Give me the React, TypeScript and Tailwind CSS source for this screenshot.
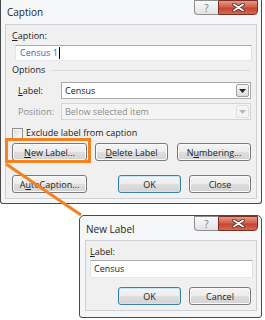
import React from "react";

function U({ children }: { children: React.ReactNode }) {
  return <span className="underline underline-offset-[1px] decoration-[0.5px]">{children}</span>;
}

function Btn({
  children,
  className = "",
  primary = false,
}: {
  children: React.ReactNode;
  className?: string;
  primary?: boolean;
}) {
  return (
    <div
      className={`flex items-center justify-center h-[18px] rounded-[3px] border text-[9px] leading-none text-[#222222] bg-[linear-gradient(#f5f5f5_0%,#ececec_50%,#dedede_50%,#d3d3d3_100%)] ${
        primary
          ? "border-[#3c7fb1] shadow-[inset_0_0_0_1px_#c8e6f8]"
          : "border-[#7a7a7a] shadow-[inset_0_0_0_1px_#fbfbfb]"
      } ${className}`}
    >
      {children}
    </div>
  );
}

function TitleButtons() {
  return (
    <div className="flex mr-[3px]">
      <div className="w-[24px] h-[15px] border border-[#8d8d8d] border-r-0 rounded-bl-[4px] bg-[linear-gradient(#fafafa,#e2e2e2)] flex items-center justify-center text-[10px] leading-none text-[#7a7a7a]">
        ?
      </div>
      <div className="w-[40px] h-[15px] border border-[#7a3026] rounded-br-[4px] bg-[linear-gradient(#e39a88_0%,#d4604b_45%,#c8452f_55%,#d26a50_100%)] flex items-center justify-center">
        <svg width="13" height="9" viewBox="0 0 13 9">
          <path d="M2 1.5 L11 7.5 M11 1.5 L2 7.5" stroke="#5a2a22" strokeWidth="3.6" strokeLinecap="round" />
          <path d="M2 1.5 L11 7.5 M11 1.5 L2 7.5" stroke="#ffffff" strokeWidth="2" strokeLinecap="round" />
        </svg>
      </div>
    </div>
  );
}

function Arrow({ disabled = false }: { disabled?: boolean }) {
  return (
    <div
      className={`w-[13px] h-[13px] mr-px border rounded-[2px] flex items-center justify-center ${
        disabled
          ? "border-[#e0e0e0] bg-[#f4f4f4]"
          : "border-[#a0a0a0] bg-[linear-gradient(#f8f8f8,#dcdcdc)]"
      }`}
    >
      <svg width="7" height="4" viewBox="0 0 7 4">
        <path d="M0 0 L7 0 L3.5 4 Z" fill={disabled ? "#b8b8b8" : "#222222"} />
      </svg>
    </div>
  );
}

export default function App() {
  return (
    <div className="relative w-[265px] h-[320px] bg-white overflow-hidden font-['Open_Sans',sans-serif] text-[#222222]">
      {/* Main Caption dialog */}
      <div className="w-[262px] h-[204px] border border-t-0 border-[#4a4a4a] rounded-b-[3px] bg-[#f5f6f7] flex flex-col">
        <div className="h-[24px] flex justify-between items-start">
          <div className="pl-[6px] pt-[6px] text-[10px] leading-[12px] text-[#1e1e1e]">Caption</div>
          <TitleButtons />
        </div>
        <div className="ml-[4px] mr-[4px] h-[175px] border border-[#cdd0d4] bg-[#f0f0f0] flex flex-col">
          <div className="mt-[5px] h-[12px] leading-[12px] pl-[6px] text-[9px]">
            <U>C</U>aption:
          </div>
          <div className="mt-[3px] ml-[9px] w-[237px] h-[16px] border border-[#abadb3] border-l-[#e2e3ea] border-r-[#dbdfe6] border-b-[#e3e9ef] bg-white flex items-center pl-[4px] text-[9px] text-[#2f64c2]">
            Census 1<span className="ml-[1px] w-px h-[12px] bg-black" />
          </div>
          <div className="mt-[3px] h-[12px] flex items-center pl-[6px] pr-[6px] text-[9px]">
            <span>Options</span>
            <div className="ml-[6px] flex-1 h-px bg-[#dcdcdc]" />
          </div>
          <div className="mt-[6px] h-[17px] flex items-center text-[9px]">
            <div className="pl-[12px] w-[55px]">
              <U>L</U>abel:
            </div>
            <div className="w-[190px] h-[17px] border border-[#a9a9a9] bg-white flex items-center justify-between pl-[3px]">
              <span>Census</span>
              <Arrow />
            </div>
          </div>
          <div className="mt-[4px] h-[17px] flex items-center text-[9px] text-[#8d8d8d]">
            <div className="pl-[12px] w-[55px]">Position:</div>
            <div className="w-[190px] h-[17px] border border-[#d5d5d5] bg-[#f4f4f4] flex items-center justify-between pl-[3px]">
              <span>Below selected item</span>
              <Arrow disabled />
            </div>
          </div>
          <div className="mt-[7px] h-[12px] flex items-center pl-[6px] text-[9px]">
            <div className="w-[11px] h-[11px] border border-[#8f8f8f] bg-[linear-gradient(135deg,#dcdcdc,#fbfbfb)] shadow-[inset_0_0_0_1px_#f4f4f4]" />
            <span className="ml-[3px]">Exclude label from caption</span>
          </div>
          <div className="mt-[4px] flex pl-[6px]">
            <Btn className="w-[75px]">
              <span>
                <U>N</U>ew Label...
              </span>
            </Btn>
            <Btn className="ml-[8px] w-[73px]">
              <span>
                <U>D</U>elete Label
              </span>
            </Btn>
            <Btn className="ml-[9px] w-[74px]">
              <span>
                N<U>u</U>mbering...
              </span>
            </Btn>
          </div>
          <div className="mt-[14px] flex pl-[6px]">
            <Btn className="w-[75px]">
              <span>
                A<U>u</U>toCaption...
              </span>
            </Btn>
            <Btn primary className="ml-[31px] w-[63px]">
              OK
            </Btn>
            <Btn className="ml-[8px] w-[62px]">Close</Btn>
          </div>
        </div>
      </div>

      {/* New Label dialog */}
      <div className="mt-[11px] ml-[79px] w-[183px] h-[103px] border border-[#4a4a4a] rounded-t-[5px] rounded-b-[3px] bg-[#f5f6f7] flex flex-col">
        <div className="h-[24px] flex justify-between items-start">
          <div className="pl-[6px] pt-[7px] text-[10px] leading-[12px] text-[#1e1e1e]">New Label</div>
          <TitleButtons />
        </div>
        <div className="ml-[5px] mr-[4px] h-[71px] border border-[#cdd0d4] bg-[#f0f0f0] flex flex-col">
          <div className="mt-[5px] h-[12px] leading-[12px] pl-[4px] text-[9px]">
            <U>L</U>abel:
          </div>
          <div className="mt-[2px] ml-[4px] w-[163px] h-[18px] border border-[#abadb3] border-l-[#e2e3ea] border-r-[#dbdfe6] border-b-[#e3e9ef] bg-white flex items-center pl-[3px] text-[9px]">
            Census
          </div>
          <div className="mt-[9px] flex pl-[32px]">
            <Btn primary className="w-[63px]">
              OK
            </Btn>
            <Btn className="ml-[8px] w-[62px]">Cancel</Btn>
          </div>
        </div>
      </div>

      {/* Orange annotation */}
      <svg className="absolute left-0 top-0 pointer-events-none" width="265" height="320" viewBox="0 0 265 320">
        <rect x="6.5" y="139.5" width="83" height="22" fill="none" stroke="#f5821f" strokeWidth="3" />
        <line x1="6" y1="164" x2="81" y2="215" stroke="#f5821f" strokeWidth="3" />
      </svg>
    </div>
  );
}
